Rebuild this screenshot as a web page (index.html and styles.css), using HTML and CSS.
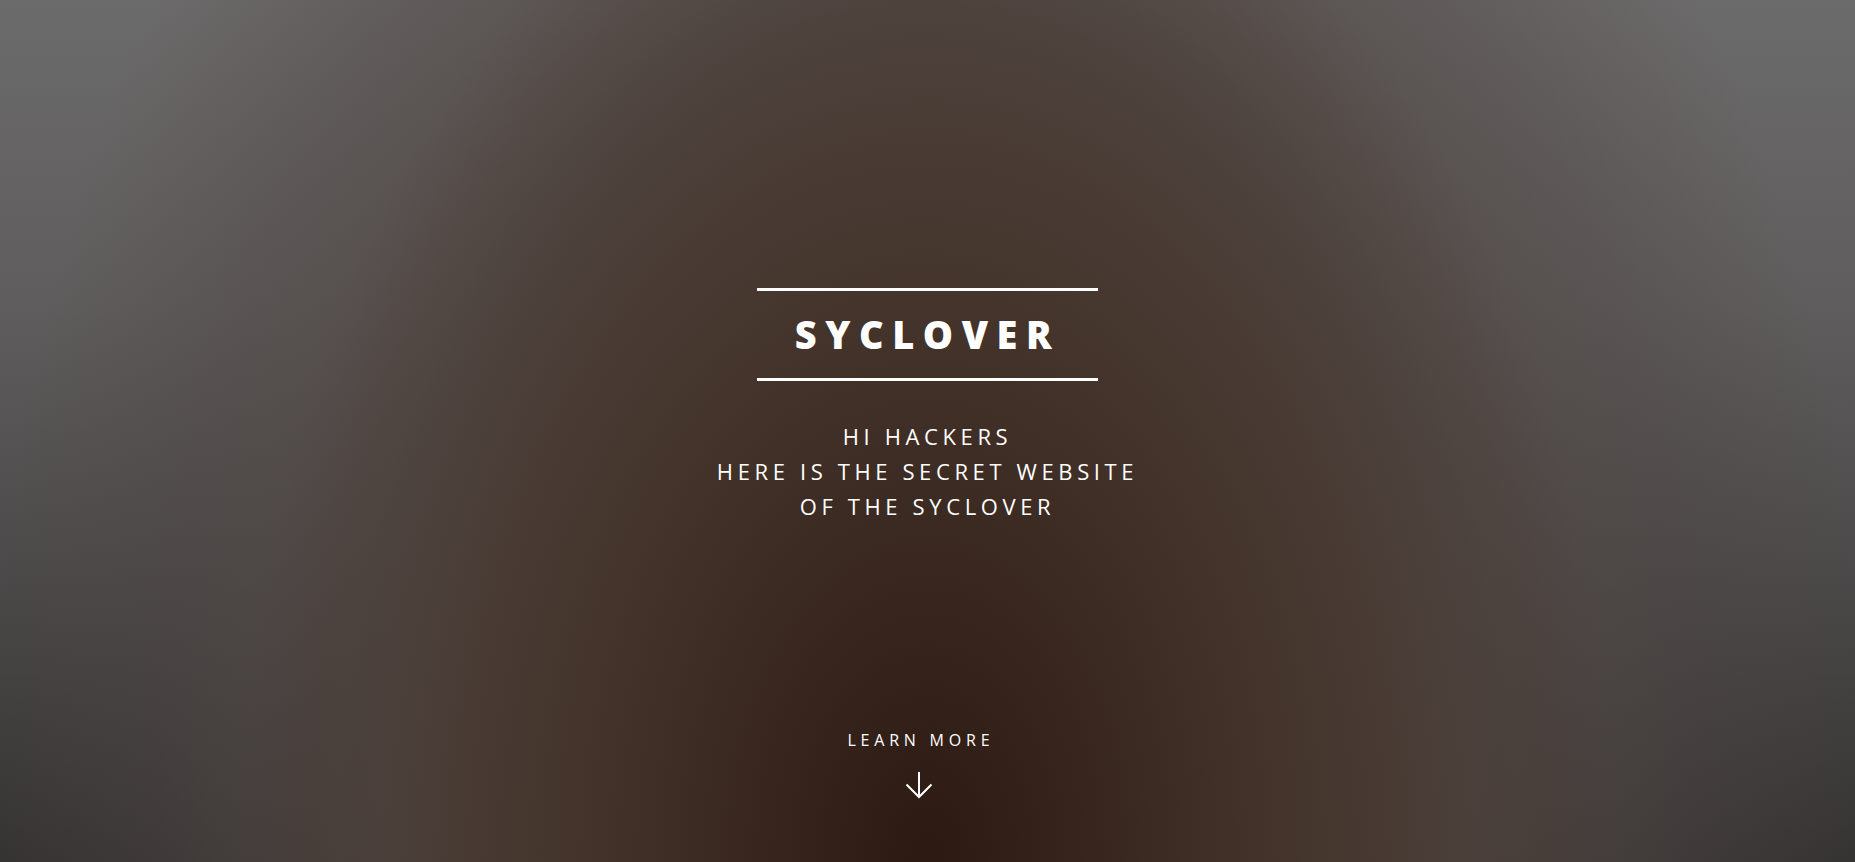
FILE: index.html
```html
<!DOCTYPE html>
<html lang="en">
<head>
<meta charset="utf-8">
<title>Syclover</title>
<link rel="stylesheet" href="styles.css">
</head>
<body>
<section class="banner">
  <div class="inner">
    <h2 class="title">SYCLOVER</h2>
    <p class="subtitle">HI HACKERS<br>HERE IS THE SECRET WEBSITE<br>OF THE SYCLOVER</p>
  </div>
  <a class="more" href="#one">
    <span class="more-label">LEARN MORE</span>
    <svg class="more-arrow" width="28" height="28" viewBox="0 0 28 28" aria-hidden="true">
      <line x1="14" y1="1" x2="14" y2="26" stroke="#fff" stroke-width="2"/>
      <polyline points="1.5,13.5 14,26 26.5,13.5" fill="none" stroke="#fff" stroke-width="2"/>
    </svg>
  </a>
</section>
</body>
</html>
```

FILE: styles.css
```css
html, body {
  margin: 0;
  padding: 0;
  height: 100%;
}

body {
  font-family: "Open Sans", "Liberation Sans", sans-serif;
  color: #fff;
  background: #3a3534;
  overflow: hidden;
}

.banner {
  box-sizing: border-box;
  height: 862px;
  display: flex;
  flex-direction: column;
  align-items: center;
  background:
    radial-gradient(ellipse 950px 1500px at 50% 100%,
      rgba(44, 26, 18, 1) 0%,
      rgba(66, 49, 40, 1) 33%,
      rgba(76, 64, 58, 0.95) 57%,
      rgba(80, 70, 67, 0.55) 72%,
      rgba(90, 85, 83, 0) 100%),
    linear-gradient(to bottom, #6c6b6b 0%, #5f5d5d 35%, #4c4a4a 65%, #343232 100%);
}

.inner {
  padding-top: 288px;
  display: flex;
  flex-direction: column;
  align-items: center;
}

.title {
  box-sizing: border-box;
  width: 341px;
  margin: 0;
  padding: 15px 0;
  border-top: 3px solid #fff;
  border-bottom: 3px solid #fff;
  font-size: 38px;
  line-height: 57px;
  font-weight: 800;
  letter-spacing: 0.225em;
  text-align: center;
}

.subtitle {
  margin: 38px 0 0;
  font-size: 22px;
  line-height: 35px;
  font-weight: 400;
  letter-spacing: 0.21em;
  text-align: center;
}

.more {
  margin-top: auto;
  margin-bottom: 63px;
  margin-right: 18px;
  display: flex;
  flex-direction: column;
  align-items: center;
  color: #fff;
  text-decoration: none;
}

.more-label {
  font-size: 16px;
  line-height: 24px;
  letter-spacing: 0.3em;
  text-indent: 0.3em;
}

.more-arrow {
  display: block;
  margin-top: 19px;
}
```
